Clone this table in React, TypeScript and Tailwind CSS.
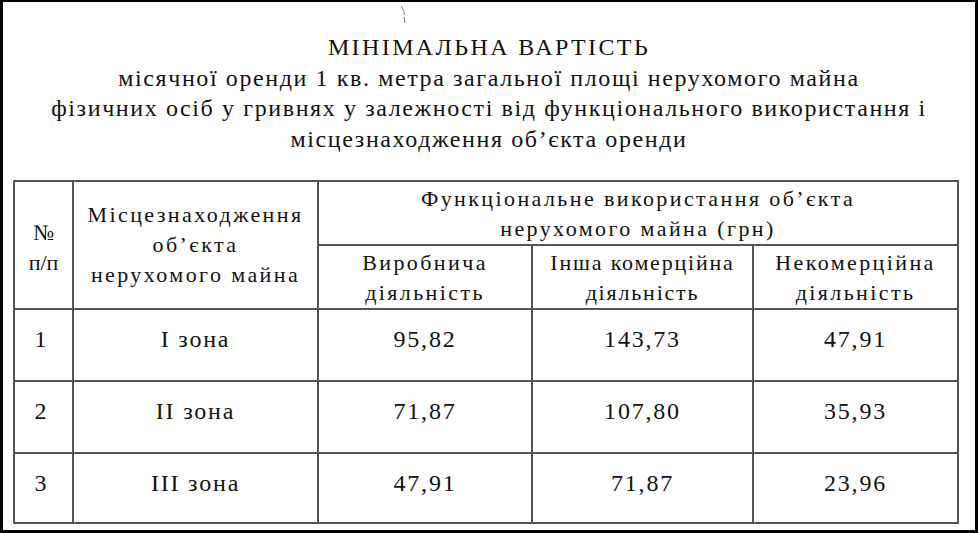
import React from "react";

const rows = [
  { n: "1", zone: "I зона", a: "95,82", b: "143,73", c: "47,91" },
  { n: "2", zone: "II зона", a: "71,87", b: "107,80", c: "35,93" },
  { n: "3", zone: "III зона", a: "47,91", b: "71,87", c: "23,96" },
];

export default function App() {
  return (
    <div className="w-[978px] h-[533px] bg-black pt-[2px] pl-[3px] pr-[3px] pb-[3px] font-['Liberation_Serif','Times_New_Roman',serif]">
      <div className="relative w-full h-full bg-white text-[#111] flex flex-col">
        {/* scan mark */}
        <svg className="absolute left-[396px] top-[3px]" width="10" height="20" viewBox="0 0 10 20">
          <path d="M2 1 C4 4, 6 7, 5 10 M5 12 L6 18" stroke="#777" strokeWidth="1" fill="none" />
        </svg>

        {/* Title */}
        <div className="pt-[30px] text-center text-[24px] leading-[30.5px] tracking-[1.6px]">
          <div className="tracking-[2.4px]">МІНІМАЛЬНА ВАРТІСТЬ</div>
          <div>місячної оренди 1 кв. метра загальної площі нерухомого майна</div>
          <div>фізичних осіб у гривнях у залежності від функціонального використання і</div>
          <div>місцезнаходження об’єкта оренди</div>
        </div>

        {/* Table */}
        <div className="mt-[26px] ml-[10px]">
          <table className="table-fixed border-collapse w-[944px]">
            <colgroup>
              <col className="w-[59px]" />
              <col className="w-[245px]" />
              <col className="w-[214px]" />
              <col className="w-[221px]" />
              <col className="w-[205px]" />
            </colgroup>
            <thead className="text-[22px] leading-[30px] tracking-[2.4px]">
              <tr className="h-[63px]">
                <th rowSpan={2} className="border-2 border-[#555] font-normal align-middle pt-[6px] tracking-normal">
                  №<br />п/п
                </th>
                <th rowSpan={2} className="border-2 border-[#555] font-normal align-middle">
                  Місцезнаходження
                  <br />
                  об’єкта
                  <br />
                  нерухомого майна
                </th>
                <th colSpan={3} className="border-2 border-[#555] font-normal align-middle pt-[2px]">
                  Функціональне використання об’єкта
                  <br />
                  нерухомого майна (грн)
                </th>
              </tr>
              <tr className="h-[64px]">
                <th className="border-2 border-[#555] font-normal align-middle pt-[2px]">
                  Виробнича
                  <br />
                  діяльність
                </th>
                <th className="border-2 border-[#555] font-normal align-middle pt-[2px] tracking-[1.8px]">
                  Інша комерційна
                  <br />
                  діяльність
                </th>
                <th className="border-2 border-[#555] font-normal align-middle pt-[2px]">
                  Некомерційна
                  <br />
                  діяльність
                </th>
              </tr>
            </thead>
            <tbody className="text-[24px] leading-[30px] tracking-[1.8px]">
              {rows.map((r, i) => (
                <tr key={r.n} className={i === 2 ? "h-[70px]" : "h-[72px]"}>
                  <td className="border-2 border-[#555] text-center align-top pt-[14px] pr-[4px]">{r.n}</td>
                  <td className="border-2 border-[#555] text-center align-top pt-[14px]">{r.zone}</td>
                  <td className="border-2 border-[#555] text-center align-top pt-[14px]">{r.a}</td>
                  <td className="border-2 border-[#555] text-center align-top pt-[14px]">{r.b}</td>
                  <td className="border-2 border-[#555] text-center align-top pt-[14px]">{r.c}</td>
                </tr>
              ))}
            </tbody>
          </table>
        </div>
      </div>
    </div>
  );
}
